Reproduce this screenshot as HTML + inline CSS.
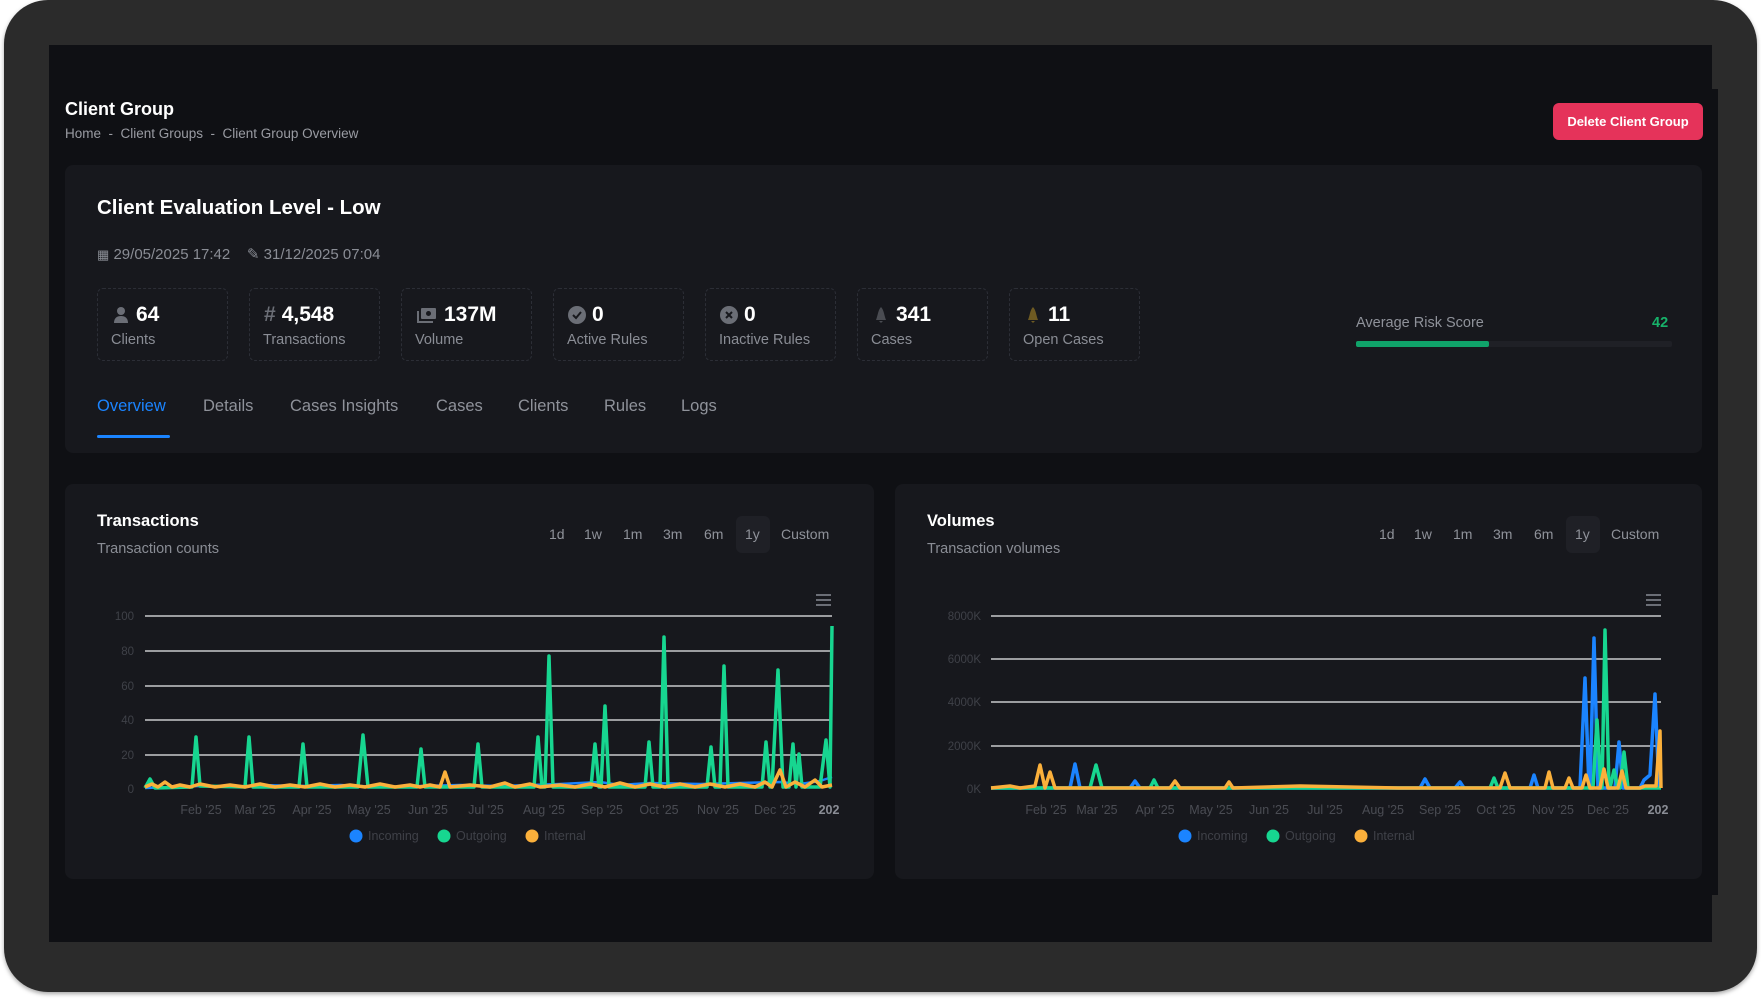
<!DOCTYPE html>
<html><head><meta charset="utf-8">
<style>
*{box-sizing:border-box;margin:0;padding:0}
body{width:1761px;height:1000px;background:#fff;font-family:"Liberation Sans",sans-serif;position:relative;overflow:hidden}
.frame{position:absolute;left:4px;top:0;width:1753px;height:992px;background:#2b2b2b;border-radius:44px;box-shadow:0 2px 4px rgba(0,0,0,.35)}
.screen{position:absolute;left:49px;top:45px;width:1663px;height:897px;background:#0f1014}
.screen2{position:absolute;left:1700px;top:89px;width:18px;height:806px;background:#0f1014}
.abs{position:absolute}
.t1{left:65px;top:99px;color:#fff;font-size:18px;font-weight:bold}
.bc{left:65px;top:126px;color:#9a9ca3;font-size:13.5px}
.btn{left:1553px;top:103px;width:150px;height:37px;background:#e5335a;border-radius:6px;color:#fff;font-size:13px;font-weight:bold;text-align:center;line-height:37px}
.card{background:#17181d;border-radius:8px;position:absolute}
.h2{left:97px;top:196px;color:#fff;font-size:20.5px;font-weight:bold}
.dates{left:97px;top:245px;color:#8a8d95;font-size:15px}
.stat{position:absolute;top:288px;width:131px;height:73px;border:1px dashed #2c2e36;border-radius:6px}
.stat .n{position:absolute;left:14px;top:14px;color:#fff;font-size:21px;font-weight:bold;display:flex;align-items:center;gap:6px}
.stat .l{position:absolute;left:13px;top:43px;color:#8a8d95;font-size:14.5px}
.ic{display:inline-block;width:18px;height:18px}
.tab{position:absolute;top:397px;font-size:16.5px;color:#8f929a}
.ct{color:#fff;font-size:16.5px;font-weight:bold;position:absolute}
.cs{color:#8a8d95;font-size:14.5px;position:absolute}
.rg{position:absolute;top:526px;font-size:14px;color:#8f929a}
.sel{position:absolute;top:516px;width:34px;height:37px;background:#1f2026;border-radius:6px}
svg text{font-family:"Liberation Sans",sans-serif}
</style></head><body>
<div class="frame"></div>
<div class="screen"></div>
<div class="screen2"></div>
<div class="abs t1">Client Group</div>
<div class="abs bc">Home &nbsp;-&nbsp; Client Groups &nbsp;-&nbsp; Client Group Overview</div>
<div class="abs btn">Delete Client Group</div>

<div class="card" style="left:65px;top:165px;width:1637px;height:288px"></div>
<div class="abs h2">Client Evaluation Level - Low</div>
<div class="abs dates"><span style="font-size:13px">&#9638;</span> 29/05/2025 17:42 &nbsp;&nbsp; <span>&#9998;</span> 31/12/2025 07:04</div>

<div class="stat" style="left:97px"><div class="n"><svg class="ic" viewBox="0 0 18 18"><circle cx="9" cy="5" r="4" fill="#6b6e76"/><path d="M2 17c0-5 3-7 7-7s7 2 7 7z" fill="#6b6e76"/></svg>64</div><div class="l">Clients</div></div>
<div class="stat" style="left:249px"><div class="n"><span style="color:#6b6e76">#</span>4,548</div><div class="l">Transactions</div></div>
<div class="stat" style="left:401px"><div class="n"><svg class="ic" viewBox="0 0 20 18" style="width:22px"><rect x="4" y="2" width="15" height="11" rx="1" fill="#6b6e76"/><circle cx="11.5" cy="7.5" r="2.5" fill="#17181d"/><path d="M1 5v11h15" stroke="#6b6e76" stroke-width="2" fill="none"/></svg>137M</div><div class="l">Volume</div></div>
<div class="stat" style="left:553px"><div class="n"><svg class="ic" viewBox="0 0 18 18"><circle cx="9" cy="9" r="9" fill="#6b6e76"/><path d="M5 9l3 3 5-6" stroke="#17181d" stroke-width="2" fill="none"/></svg>0</div><div class="l">Active Rules</div></div>
<div class="stat" style="left:705px"><div class="n"><svg class="ic" viewBox="0 0 18 18"><circle cx="9" cy="9" r="9" fill="#6b6e76"/><path d="M6 6l6 6M12 6l-6 6" stroke="#17181d" stroke-width="2"/></svg>0</div><div class="l">Inactive Rules</div></div>
<div class="stat" style="left:857px"><div class="n"><svg class="ic" viewBox="0 0 18 18"><path d="M9 1c-3 3-3 8-5 13h10c-2-5-2-10-5-13z M7 15h4l-2 2z" fill="#4a4c52"/></svg>341</div><div class="l">Cases</div></div>
<div class="stat" style="left:1009px"><div class="n"><svg class="ic" viewBox="0 0 18 18"><path d="M9 1c-3 3-3 8-5 13h10c-2-5-2-10-5-13z M7 15h4l-2 2z" fill="#6e5a22"/></svg>11</div><div class="l">Open Cases</div></div>

<div class="abs" style="left:1356px;top:315px;color:#8f929a;font-size:14.5px">Average Risk Score</div>
<div class="abs" style="left:1652px;top:315px;color:#17b26a;font-size:14.5px;font-weight:bold">42</div>
<div class="abs" style="left:1356px;top:341px;width:316px;height:6px;background:#1f2026;border-radius:2px"></div>
<div class="abs" style="left:1356px;top:341px;width:133px;height:6px;background:#10a36a;border-radius:2px"></div>

<div class="tab" style="left:97px;color:#1b84ff">Overview</div>
<div class="abs" style="left:97px;top:435px;width:73px;height:3px;background:#1b84ff;border-radius:2px"></div>
<div class="tab" style="left:203px">Details</div>
<div class="tab" style="left:290px">Cases Insights</div>
<div class="tab" style="left:436px">Cases</div>
<div class="tab" style="left:518px">Clients</div>
<div class="tab" style="left:604px">Rules</div>
<div class="tab" style="left:681px">Logs</div>

<div class="card" style="left:65px;top:484px;width:809px;height:395px"></div>
<div class="ct" style="left:97px;top:512px">Transactions</div>
<div class="cs" style="left:97px;top:541px">Transaction counts</div>
<div class="sel" style="left:736px"></div>
<div class="rg" style="left:549px">1d</div><div class="rg" style="left:584px">1w</div><div class="rg" style="left:623px">1m</div><div class="rg" style="left:663px">3m</div><div class="rg" style="left:704px">6m</div><div class="rg" style="left:745px">1y</div><div class="rg" style="left:781px">Custom</div>

<div class="card" style="left:895px;top:484px;width:807px;height:395px"></div>
<div class="ct" style="left:927px;top:512px">Volumes</div>
<div class="cs" style="left:927px;top:541px">Transaction volumes</div>
<div class="sel" style="left:1566px"></div>
<div class="rg" style="left:1379px">1d</div><div class="rg" style="left:1414px">1w</div><div class="rg" style="left:1453px">1m</div><div class="rg" style="left:1493px">3m</div><div class="rg" style="left:1534px">6m</div><div class="rg" style="left:1575px">1y</div><div class="rg" style="left:1611px">Custom</div>

<svg class="abs" style="left:0;top:0" width="1761" height="1000">
<g fill="#6b6e76"><rect x="816" y="594" width="15" height="2"/><rect x="816" y="599" width="15" height="2"/><rect x="816" y="604" width="15" height="2"/>
<rect x="1646" y="594" width="15" height="2"/><rect x="1646" y="599" width="15" height="2"/><rect x="1646" y="604" width="15" height="2"/></g>
<g stroke="#c8c9cc" stroke-width="1.5">
<line x1="145" y1="616" x2="832" y2="616"/><line x1="145" y1="651" x2="832" y2="651"/><line x1="145" y1="686" x2="832" y2="686"/><line x1="145" y1="720" x2="832" y2="720"/><line x1="145" y1="755" x2="832" y2="755"/>
<line x1="991" y1="616" x2="1661" y2="616"/><line x1="991" y1="659" x2="1661" y2="659"/><line x1="991" y1="702" x2="1661" y2="702"/><line x1="991" y1="746" x2="1661" y2="746"/>
</g>
<g fill="#3f4148" font-size="11.5" text-anchor="end">
<text x="134" y="620">100</text><text x="134" y="655">80</text><text x="134" y="690">60</text><text x="134" y="724">40</text><text x="134" y="759">20</text><text x="134" y="793">0</text>
<text x="981" y="620">8000K</text><text x="981" y="663">6000K</text><text x="981" y="706">4000K</text><text x="981" y="750">2000K</text><text x="981" y="793">0K</text>
</g>
<g fill="#4a4c53" font-size="12.5" text-anchor="middle">
<text x="201" y="814">Feb '25</text><text x="255" y="814">Mar '25</text><text x="312" y="814">Apr '25</text><text x="369" y="814">May '25</text><text x="428" y="814">Jun '25</text><text x="486" y="814">Jul '25</text><text x="544" y="814">Aug '25</text><text x="602" y="814">Sep '25</text><text x="659" y="814">Oct '25</text><text x="718" y="814">Nov '25</text><text x="775" y="814">Dec '25</text><text x="829" y="814" fill="#8a8d95" font-weight="bold">202</text>
<text x="1046" y="814">Feb '25</text><text x="1097" y="814">Mar '25</text><text x="1155" y="814">Apr '25</text><text x="1211" y="814">May '25</text><text x="1269" y="814">Jun '25</text><text x="1325" y="814">Jul '25</text><text x="1383" y="814">Aug '25</text><text x="1440" y="814">Sep '25</text><text x="1496" y="814">Oct '25</text><text x="1553" y="814">Nov '25</text><text x="1608" y="814">Dec '25</text><text x="1658" y="814" fill="#8a8d95" font-weight="bold">202</text>
</g>
<path fill="none" stroke="#1b84ff" stroke-width="2.5" stroke-linejoin="round" d="M145 788 L200 786 L230 787 L260 785 L300 786 L340 785 L380 787 L420 786 L460 785 L500 786 L560 784 L600 782 L620 785 L650 783 L700 784 L740 783 L780 782 L800 784 L820 781 L832 777"/>
<path fill="none" stroke="#17d690" stroke-width="3.5" stroke-linejoin="round" d="M145 788 L150 779 L155 788 L192 787 L196 737 L200 786 L245 787 L249 737 L253 787 L299 787 L303 744 L307 787 L358 787 L363 735 L368 787 L417 787 L421 749 L425 787 L474 787 L478 744 L482 787 L534 787 L538 737 L542 787 L545 787 L549 656 L553 787 L591 787 L595 744 L599 787 L601 787 L605 706 L609 787 L645 787 L649 742 L653 787 L660 787 L664 637 L668 787 L707 787 L711 747 L715 787 L720 787 L724 666 L728 787 L762 787 L766 742 L770 787 L772 787 L778 670 L783 787 L789 787 L793 744 L796 787 L799 754 L802 787 L820 787 L826 740 L830 787 L832 626"/>
<path fill="none" stroke="#fbb03b" stroke-width="3.5" stroke-linejoin="round" d="M145 787 L152 784 L158 787 L165 782 L172 787 L180 785 L190 787 L200 784 L215 787 L230 785 L245 787 L260 784 L275 787 L290 785 L305 787 L320 784 L335 787 L350 785 L365 787 L380 784 L395 787 L410 785 L420 787 L430 785 L440 787 L445 772 L450 787 L470 785 L490 787 L505 783 L515 787 L530 784 L540 787 L560 785 L575 787 L590 784 L605 787 L620 783 L635 787 L650 784 L665 787 L680 784 L695 787 L710 784 L725 787 L740 784 L755 787 L765 782 L772 787 L780 770 L786 787 L795 782 L805 787 L815 780 L822 787 L832 785"/>
<path fill="none" stroke="#1b84ff" stroke-width="3.5" stroke-linejoin="round" d="M991 788 L1070 788 L1075 764 L1080 788 L1130 788 L1135 781 L1140 788 L1420 788 L1425 779 L1430 788 L1455 788 L1460 782 L1464 788 L1530 788 L1534 775 L1538 788 L1580 788 L1585 678 L1589 788 L1590 788 L1594 638 L1598 788 L1615 788 L1619 742 L1623 788 L1640 788 L1644 780 L1650 775 L1655 694 L1659 788"/>
<path fill="none" stroke="#17d690" stroke-width="3.5" stroke-linejoin="round" d="M991 788 L1090 788 L1096 765 L1102 788 L1150 788 L1154 780 L1158 788 L1490 788 L1494 778 L1498 788 L1593 788 L1597 720 L1601 788 L1602 788 L1605 630 L1609 788 L1610 788 L1614 770 L1618 788 L1620 788 L1624 752 L1628 788 L1661 788"/>
<path fill="none" stroke="#fbb03b" stroke-width="3.5" stroke-linejoin="round" d="M991 788 L1010 786 L1020 788 L1035 786 L1040 765 L1045 788 L1050 772 L1055 788 L1170 788 L1175 781 L1180 788 L1225 788 L1229 782 L1233 788 L1300 786 L1400 788 L1500 788 L1505 773 L1510 788 L1545 788 L1549 772 L1553 788 L1565 788 L1569 778 L1573 788 L1582 788 L1586 775 L1590 788 L1600 788 L1604 769 L1608 788 L1618 788 L1622 771 L1626 788 L1640 788 L1645 786 L1656 786 L1660 731 L1661 788"/>
<g font-size="12.5" fill="#3f4148">
<circle cx="356" cy="836" r="6.5" fill="#1b84ff"/><text x="368" y="840">Incoming</text>
<circle cx="444" cy="836" r="6.5" fill="#17d690"/><text x="456" y="840">Outgoing</text>
<circle cx="532" cy="836" r="6.5" fill="#fbb03b"/><text x="544" y="840">Internal</text>
<circle cx="1185" cy="836" r="6.5" fill="#1b84ff"/><text x="1197" y="840">Incoming</text>
<circle cx="1273" cy="836" r="6.5" fill="#17d690"/><text x="1285" y="840">Outgoing</text>
<circle cx="1361" cy="836" r="6.5" fill="#fbb03b"/><text x="1373" y="840">Internal</text>
</g>
</svg>
</body></html>
